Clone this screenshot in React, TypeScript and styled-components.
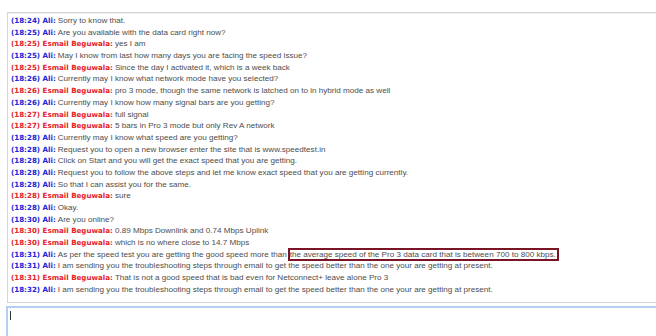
import styled, { createGlobalStyle } from "styled-components";

type Who = "agent" | "customer";

interface Line {
  time: string;
  who: Who;
  text: string;
  mark?: string;
}

const names: Record<Who, string> = {
  agent: "Ali",
  customer: "Esmail Beguwala",
};

const lines: Line[] = [
  { time: "18:24", who: "agent", text: "Sorry to know that." },
  { time: "18:25", who: "agent", text: "Are you available with the data card right now?" },
  { time: "18:25", who: "customer", text: "yes I am" },
  { time: "18:25", who: "agent", text: "May I know from last how many days you are facing the speed issue?" },
  { time: "18:25", who: "customer", text: "Since the day I activated it, which is a week back" },
  { time: "18:26", who: "agent", text: "Currently may I know what network mode have you selected?" },
  { time: "18:26", who: "customer", text: "pro 3 mode, though the same network is latched on to in hybrid mode as well" },
  { time: "18:26", who: "agent", text: "Currently may I know how many signal bars are you getting?" },
  { time: "18:27", who: "customer", text: "full signal" },
  { time: "18:27", who: "customer", text: "5 bars in Pro 3 mode but only Rev A network" },
  { time: "18:28", who: "agent", text: "Currently may I know what speed are you getting?" },
  { time: "18:28", who: "agent", text: "Request you to open a new browser enter the site that is www.speedtest.in" },
  { time: "18:28", who: "agent", text: "Click on Start and you will get the exact speed that you are getting." },
  { time: "18:28", who: "agent", text: "Request you to follow the above steps and let me know exact speed that you are getting currently." },
  { time: "18:28", who: "agent", text: "So that I can assist you for the same." },
  { time: "18:28", who: "customer", text: "sure" },
  { time: "18:28", who: "agent", text: "Okay." },
  { time: "18:30", who: "agent", text: "Are you online?" },
  { time: "18:30", who: "customer", text: "0.89 Mbps Downlink and 0.74 Mbps Uplink" },
  { time: "18:30", who: "customer", text: "which is no where close to 14.7 Mbps" },
  {
    time: "18:31",
    who: "agent",
    text: "As per the speed test you are getting the good speed more than",
    mark: "the average speed of the Pro 3 data card that is between 700 to 800 kbps.",
  },
  { time: "18:31", who: "agent", text: "I am sending you the troubleshooting steps through email to get the speed better than the one your are getting at present." },
  { time: "18:31", who: "customer", text: "That is not a good speed that is bad even for Netconnect+ leave alone Pro 3" },
  { time: "18:32", who: "agent", text: "I am sending you the troubleshooting steps through email to get the speed better than the one your are getting at present." },
];

const App = () => {
  return (
    <>
      <GlobalStyle />
      <Transcript>
        {lines.map((line, i) => (
          <Row key={i}>
            <Speaker who={line.who}>
              ({line.time}) {names[line.who]}:
            </Speaker>{" "}
            <Message>
              {line.text}
              {line.mark && <Marked>{line.mark}</Marked>}
            </Message>
          </Row>
        ))}
      </Transcript>
      <InputBox>
        <Caret />
      </InputBox>
    </>
  );
};

export default App;

const GlobalStyle = createGlobalStyle`
  html, body {
    margin: 0;
    padding: 0;
    background: #ffffff;
    overflow: hidden;
  }
  body {
    font-family: "Liberation Sans", Arial, sans-serif;
  }
`;

const Transcript = styled.div`
  margin: 12px 0 0 7px;
  padding: 2px 0 6px 3px;
  border: 1px solid #d6d6d6;
  border-right: none;
  box-shadow: inset 0 1px 0 #efefef;
  display: flex;
  flex-direction: column;
`;

const Row = styled.div`
  height: 11.7px;
  line-height: 11.7px;
  white-space: nowrap;
  display: flex;
  align-items: center;
  gap: 2px;
`;

const Speaker = styled.span<{ who: Who }>`
  font-family: "DejaVu Sans", Verdana, sans-serif;
  font-weight: bold;
  font-size: 7.1px;
  color: ${(props) => (props.who === "agent" ? "#2323d6" : "#e5232b")};
`;

const Message = styled.span`
  font-family: "Liberation Sans", Arial, sans-serif;
  font-size: 8.1px;
  color: #4d4d4d;
`;

const Marked = styled.span`
  border: 2px solid #7a1526;
  padding: 0 1px 0 0;
  margin-left: 1px;
`;

const InputBox = styled.div`
  margin: 3px 0 0 6px;
  height: 26px;
  border: 2px solid #b3cff2;
  border-right: none;
  padding: 3px 0 0 2px;
`;

const Caret = styled.span`
  display: block;
  width: 1px;
  height: 9px;
  background: #333333;
`;
